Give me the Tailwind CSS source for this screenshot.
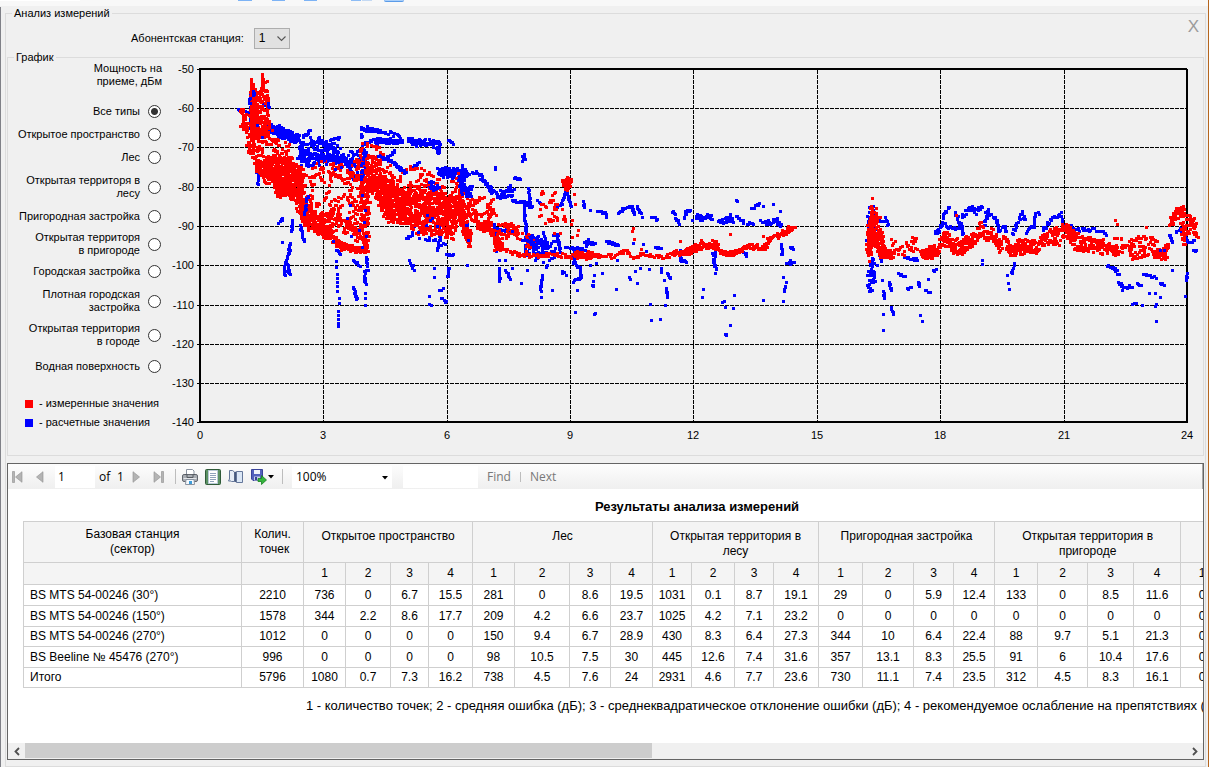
<!doctype html>
<html lang="ru">
  <head>
    <meta charset="UTF-8" />
    <meta name="viewport" content="width=device-width, initial-scale=1.0" />
    <title>Анализ измерений</title>
    <script src="https://cdn.jsdelivr.net/npm/@tailwindcss/browser@4"></script>
  </head>
  <body class="bg-[#f0f0f0] font-['Liberation_Sans',sans-serif] text-black">
    <div class="min-h-screen flex flex-col border-r border-[#b5651d]">
      <!-- bottom edge of the main toolbar -->
      <div class="h-[6px] flex items-start bg-[#f8f8f8] overflow-hidden">
        <div class="w-20 h-px bg-white"></div>
        <div class="ml-[158px] w-[14px] h-px bg-[#7db3f5]"></div>
        <div class="ml-5 w-[13px] h-px bg-[#7db3f5]"></div>
        <div class="ml-[19px] w-[13px] h-px bg-[#7db3f5]"></div>
        <div class="ml-[34px] w-[10px] h-px bg-[#8dbcf5]"></div>
        <div class="ml-px w-[10px] h-px bg-[#c4d9f3]"></div>
        <div class="ml-3 w-5 h-[2px] rounded-b-sm border-b border-[#5b9be8] bg-[#a9cffa]"></div>
      </div>

      <div class="grow flex flex-col border-l border-[#7f8087] mt-px pl-1 pr-[2px]">
        <fieldset class="grow min-w-0 flex flex-col border border-[#dcdcdc] px-px pb-[5px]">
          <legend class="ml-[5px] px-[2px] text-[11px] leading-[13px]">Анализ измерений</legend>

          <div class="flex items-start">
            <div class="flex items-center pt-2 pl-[124px] gap-[10px]">
              <label for="station" class="text-[11px] leading-[13px]">Абонентская станция:</label>
              <div class="relative">
                <select
                  id="station"
                  class="appearance-none block w-9 h-[21px] pl-1 border border-[#adadad] bg-[#e1e1e1] text-[12px] leading-[13px]"
                >
                  <option>1</option>
                </select>
                <svg class="absolute right-1 top-[7px] pointer-events-none" width="9" height="7" viewBox="0 0 9 7">
                  <path d="M.5 1.5 4.5 5.5 8.5 1.5" fill="none" stroke="#555" stroke-width="1.1" />
                </svg>
              </div>
            </div>
            <button type="button" aria-label="Закрыть" class="ml-auto mr-[5px] text-[17px] leading-[13px] text-[#9b9b9b]">X</button>
          </div>

          <fieldset class="min-w-0 border border-[#dcdcdc] mt-[2px]">
            <legend class="ml-[6px] px-[2px] text-[11px] leading-[13px]">График</legend>
            <div class="flex items-start">
              <div class="w-[162px] shrink-0 -mt-[2px] text-[11px] leading-[13px] text-right">
                <p class="pr-2 mb-[17px]">Мощность на<br />приеме, дБм</p>
                <div id="types" class="flex flex-col items-end pr-[9px]"></div>
                <p class="mt-6 ml-[17px] flex items-center gap-[6px]">
                  <span class="size-2 bg-[#f00]"></span>- измеренные значения
                </p>
                <p class="mt-[6px] ml-[17px] flex items-center gap-[6px]">
                  <span class="size-2 bg-[#00f]"></span>- расчетные значения
                </p>
              </div>
              <svg id="chart" class="grow min-w-0 text-[11px]" viewBox="170 64 1033 391" shape-rendering="crispEdges"></svg>
            </div>
          </fieldset>

          <section class="grow flex flex-col min-w-0 mt-[7px] border border-[#646464] bg-white">
            <div
              class="h-[25px] shrink-0 flex items-center bg-linear-to-b from-[#fdfdfd] to-[#efefef] border-r border-[#a8a8a8] font-['Open_Sans',sans-serif] text-[12px] leading-4"
            >
              <button type="button" aria-label="First page" class="ml-1">
                <svg width="11" height="12" viewBox="0 0 11 12" fill="#b4b4b4" stroke="#8f8f8f" stroke-width=".6">
                  <path d="M.5.5h2v11h-2zM10 .7v10.600L3.500 6z" />
                </svg>
              </button>
              <button type="button" aria-label="Previous page" class="ml-[13px]">
                <svg width="8" height="12" viewBox="0 0 8 12" fill="#b4b4b4" stroke="#8f8f8f" stroke-width=".6">
                  <path d="M7 .7v10.600L.5 6z" />
                </svg>
              </button>
              <input aria-label="Page" value="1" class="ml-[11px] w-10 h-[22px] pl-[3px] bg-white outline-none" />
              <span class="ml-1 w-[18px]">of</span>
              <span class="w-[7px]">1</span>
              <button type="button" aria-label="Next page" class="ml-2">
                <svg width="8" height="12" viewBox="0 0 8 12" fill="#b4b4b4" stroke="#8f8f8f" stroke-width=".6">
                  <path d="M1 .7v10.600L7.500 6z" />
                </svg>
              </button>
              <button type="button" aria-label="Last page" class="ml-[13px]">
                <svg width="11" height="12" viewBox="0 0 11 12" fill="#b4b4b4" stroke="#8f8f8f" stroke-width=".6">
                  <path d="M8.500.5h2v11h-2zM1 .7v10.600L7.500 6z" />
                </svg>
              </button>
              <span class="ml-[11px] w-px h-[15px] bg-[#bdbdbd]"></span>
              <button type="button" aria-label="Print" class="ml-[6px]">
                <svg width="16" height="16" viewBox="0 0 16 16">
                  <path d="M4.500.5h6l1.500 1.500V6h-7.500z" fill="#fff" stroke="#8a93a0" />
                  <rect x=".5" y="5.500" width="15" height="7" rx="1.500" fill="#a9adb3" stroke="#62666d" />
                  <path d="M3 5.500h2v3h6v-3h2" fill="none" stroke="#555a61" />
                  <path d="M1.500 9.500h13" stroke="#e4e6e9" />
                  <path d="M4 10.500h8l.5 5h-9z" fill="#f5f9fd" stroke="#8a93a0" />
                  <path d="M7 12h3v3H7z" fill="#3d9bd8" />
                </svg>
              </button>
              <button type="button" aria-label="Print layout" class="ml-[7px]">
                <svg width="16" height="16" viewBox="0 0 16 16">
                  <rect x=".5" y=".5" width="15" height="15" rx="1" fill="#7fae80" stroke="#2f5a38" />
                  <path d="M1 1h2v14H1zM13 1h2v14h-2z" fill="#5b9163" />
                  <path d="M3.500 1.500h9v13h-9z" fill="#fff" stroke="#b9c9d8" />
                  <path d="M5 4.500h6M5 6.500h6M5 8.500h6M5 10.500h6M5 12.500h4" stroke="#8fa2bb" />
                </svg>
              </button>
              <button type="button" aria-label="Page setup" class="ml-[7px]">
                <svg width="16" height="16" viewBox="0 0 16 16">
                  <path d="M1.500 1.500h3l2 1.500v9.500h-3l-.5-.5H.5l1-2z" fill="#e6edf6" stroke="#65779a" />
                  <path d="M6.500 3 8.500 2.500v11L6.500 12.500z" fill="#46587c" />
                  <path d="M8.500 2.500h6v11h-6z" fill="#dbe7f6" stroke="#65779a" />
                </svg>
              </button>
              <button type="button" aria-label="Export" class="ml-[6px] flex items-center">
                <svg width="17" height="17" viewBox="0 0 17 17">
                  <path d="M1.500 1.500h11v11H3l-1.500-1.500z" fill="#5361bd" stroke="#39439a" />
                  <path d="M4 2h6v4H4z" fill="#f0f3fb" />
                  <path d="M4 8.500h6v4H4z" fill="#c9d1e6" />
                  <path d="M5 9h2v3H5z" fill="#39439a" />
                  <path d="M8 10.500h3.500V7.500L16.500 12l-5 4.500v-3H8z" fill="#35b53c" stroke="#15801f" stroke-width=".8" />
                </svg>
                <svg class="ml-px" width="6" height="4" viewBox="0 0 6 4"><path d="M0 0h6L3 3.500z" /></svg>
              </button>
              <span class="ml-2 w-px h-[15px] bg-[#bdbdbd]"></span>
              <div class="relative ml-[9px]">
                <select aria-label="Zoom" class="appearance-none block w-[100px] h-[22px] pl-1 bg-white">
                  <option>100%</option>
                </select>
                <svg class="absolute right-1 top-[10px] pointer-events-none" width="6" height="4" viewBox="0 0 6 4">
                  <path d="M0 0h6L3 3.500z" />
                </svg>
              </div>
              <input aria-label="Find text" class="ml-[11px] w-[75px] h-[22px] bg-white outline-none" />
              <button type="button" class="ml-[9px] text-[#787878]">Find</button>
              <span class="ml-[9px] w-px h-[10px] bg-[#bdbdbd]"></span>
              <button type="button" class="ml-[9px] text-[#787878]">Next</button>
            </div>

            <div class="grow overflow-hidden text-[13px] leading-[15px]">
              <h1 class="ml-[15px] w-[1348px] pt-[10px] pb-[7px] text-center font-bold">Результаты анализа измерений</h1>
              <table class="ml-[15px] w-[1200px] table-fixed border-collapse text-center text-[12px] leading-[15px]">
                <colgroup id="cols"></colgroup>
                <thead id="head" class="bg-[#f4f4f4]"></thead>
                <tbody id="rows"></tbody>
              </table>
              <p class="ml-[298px] mt-[10px] mb-[30px] whitespace-nowrap">
                1 - количество точек; 2 - средняя ошибка (дБ); 3 - среднеквадратическое отклонение ошибки (дБ); 4 -
                рекомендуемое ослабление на препятствиях (дБ)
              </p>
            </div>

            <div class="h-[16px] shrink-0 flex items-center bg-[#f0f0f0]">
              <button type="button" aria-label="Scroll left" class="w-[17px] flex justify-center">
                <svg width="6" height="9" viewBox="0 0 6 9"><path d="M5 1 1.500 4.500 5 8" fill="none" stroke="#505050" stroke-width="1.800" /></svg>
              </button>
              <div class="grow h-[15px] self-start">
                <div class="h-full w-[54%] bg-[#cdcdcd]"></div>
              </div>
              <button type="button" aria-label="Scroll right" class="w-[17px] flex justify-center">
                <svg width="6" height="9" viewBox="0 0 6 9"><path d="M1 1 4.500 4.500 1 8" fill="none" stroke="#505050" stroke-width="1.800" /></svg>
              </button>
            </div>
          </section>
        </fieldset>
      </div>
    </div>

    <script>
      // terrain types
      const types = [
        ["Все типы", ""],
        ["Открытое пространство", "mt-[10px]"],
        ["Лес", "mt-[10px]"],
        ["Открытая территоря в<br>лесу", "mt-[10px]"],
        ["Пригородная застройка", "mt-[10px]"],
        ["Открытая территоря<br>в пригороде", "mt-[8px]"],
        ["Городская застройка", "mt-[8px]"],
        ["Плотная городская<br>застройка", "mt-[10px]"],
        ["Открытая территория<br>в городе", "mt-[8px]"],
        ["Водная поверхность", "mt-[12px]"],
      ];
      document.getElementById("types").innerHTML = types
        .map(
          ([name, gap], i) => `
        <div class="flex items-center gap-2 ${gap}">
          <label for="t${i}">${name}</label>
          <input type="radio" name="type" id="t${i}" ${i ? "" : "checked"}
            class="appearance-none size-[13px] shrink-0 rounded-full border border-[#333] bg-white checked:bg-[radial-gradient(circle,#333_3px,#fff_4px)]">
        </div>`,
        )
        .join("");

      // report table
      const widths = [
        218, 62, 42, 45, 38, 44, 42, 55, 41, 42, 39, 43, 39, 45, 44, 51, 40, 41, 43, 50, 46, 47, 43,
      ];
      const groups = [
        "Открытое пространство",
        "Лес",
        "Открытая территория в<br>лесу",
        "Пригородная застройка",
        "Открытая территория в<br>пригороде",
      ];
      const data = [
        "BS MTS 54-00246 (30°)|2210|736|0|6.7|15.5|281|0|8.6|19.5|1031|0.1|8.7|19.1|29|0|5.9|12.4|133|0|8.5|11.6|0",
        "BS MTS 54-00246 (150°)|1578|344|2.2|8.6|17.7|209|4.2|6.6|23.7|1025|4.2|7.1|23.2|0|0|0|0|0|0|0|0|0",
        "BS MTS 54-00246 (270°)|1012|0|0|0|0|150|9.4|6.7|28.9|430|8.3|6.4|27.3|344|10|6.4|22.4|88|9.7|5.1|21.3|0",
        "BS Beeline № 45476 (270°)|996|0|0|0|0|98|10.5|7.5|30|445|12.6|7.4|31.6|357|13.1|8.3|25.5|91|6|10.4|17.6|0",
        "Итого|5796|1080|0.7|7.3|16.2|738|4.5|7.6|24|2931|4.6|7.7|23.6|730|11.1|7.4|23.5|312|4.5|8.3|16.1|0",
      ];
      document.getElementById("cols").innerHTML = widths
        .map((w) => `<col style="width:${w}px">`)
        .join("");
      const th = (text, span, cls) =>
        `<th colspan="${span}" class="border border-[#cfcfcf] font-normal align-top ${cls}">${text}</th>`;
      document.getElementById("head").innerHTML =
        `<tr class="h-[41px]">${th("Базовая станция<br>(сектор)", 1, "pt-[5px]")}${th("Колич.<br>&nbsp;точек", 1, "pt-[5px]")}` +
        groups.map((g) => th(g, 4, "pt-[7px]")).join("") +
        th("", 1, "") +
        `</tr><tr class="h-[22px]">${th("", 1, "")}${th("", 1, "")}` +
        "12341234123412341234".split("").map((n) => th(n, 1, "pt-[3px]")).join("") +
        th("1", 1, "pt-[3px]") +
        "</tr>";
      document.getElementById("rows").innerHTML = data
        .map((line, r) => {
          const cells = line.split("|").map((v, i) =>
            `<td class="border border-[#cfcfcf] ${i ? "" : "text-left pl-[6px]"}">${v}</td>`,
          );
          return `<tr class="${r % 2 || r === 0 ? "h-[21px]" : "h-[20px]"}">${cells.join("")}</tr>`;
        })
        .join("");

      // chart
      let seed = 7;
      const rnd = () => {
        seed = (seed * 1664525 + 1013904223) % 4294967296;
        return seed / 4294967296;
      };
      const dot = (x, y) => `M${Math.round(x) - 1} ${Math.round(y) - 1}h3v3h-3z`;

      // n dots spread between an upper and a lower edge: [x, top, bottom], ...
      const holes = [
        [319, 190, 7, 10],
        [338, 188, 7, 9],
        [345, 208, 4, 9],
        [325, 208, 6, 5],
        [478, 187, 6, 8],
        [306, 180, 4, 5],
      ];
      const band = (n, ...edge) => {
        let d = "";
        const x0 = edge[0][0];
        const x1 = edge[edge.length - 1][0];
        for (let i = 0; i < n; i++) {
          const x = x0 + (x1 - x0) * rnd();
          const k = Math.max(1, edge.findIndex((e) => e[0] >= x));
          const [a, b] = [edge[k - 1], edge[k]];
          const t = (x - a[0]) / (b[0] - a[0]);
          const top = a[1] + (b[1] - a[1]) * t;
          const low = a[2] + (b[2] - a[2]) * t;
          // ragged edge on tall clouds
          const rag = Math.min(6, (low - top) / 8);
          const y = top + (low - top) * rnd() + (rnd() - 0.5) * rag * 2;
          if (holes.some(([cx, cy, rx, ry]) => ((x - cx) / rx) ** 2 + ((y - cy) / ry) ** 2 < 1)) continue;
          d += dot(x, y);
          if (rnd() < 0.25) d += dot(x + (rnd() < 0.5 ? 2 : -2), y + (rnd() - 0.5) * 3);
        }
        return d;
      };

      // polylines of dots: "x,y x,y;x,y"
      const trail = (text, jitter = 1) =>
        text
          .trim()
          .split(/\s*;\s*/)
          .map((part) => {
            const p = part.split(" ").map((s) => s.split(",").map(Number));
            let d = dot(...p[0]);
            for (let i = 1; i < p.length; i++) {
              const [ax, ay] = p[i - 1];
              const [bx, by] = p[i];
              const n = Math.ceil(Math.hypot(bx - ax, by - ay) / 1.5);
              for (let j = 1; j <= n; j++) {
                d += dot(
                  ax + ((bx - ax) * j) / n + (rnd() - 0.5) * jitter,
                  ay + ((by - ay) * j) / n + (rnd() - 0.5) * jitter * 2,
                );
              }
            }
            return d;
          })
          .join("");

      const layers = [
        ["#00f",
          band(230, [266, 124, 130], [280, 127, 136], [298, 135, 143]) +
          band(75, [298, 140, 164], [315, 138, 166], [335, 142, 164], [350, 145, 165], [362, 150, 178]) +
          band(70, [300, 152, 158], [325, 152, 160], [345, 156, 164], [354, 165, 182]) +
          band(100, [438, 167, 175], [450, 168, 178], [466, 170, 179]) +
          band(20, [403, 225, 240], [425, 225, 240], [447, 225, 248]) +
          band(70, [524, 228, 250], [535, 233, 260], [548, 244, 270], [556, 236, 254]) +
          band(30, [868, 208, 240], [876, 205, 240]) +
          band(36, [868, 255, 302], [872, 255, 282], [875, 256, 282]) +
          trail(`238,109 250,114;250,94 250,127;253,90 253,95;266,104 260,107;298,140 303,143 298,158;303,137 310,129;
            257,165 258,183;256,172 259,172;311,140 330,145 338,152;330,140 340,137;336,158 348,162 354,180;301,155 312,167;
            278,223 282,218;292,220 291,231;282,242;300,225 304,241;290,243 288,255;287,256 284,267 285,276;287,264 289,274;
            303,208 308,195;336,250 340,254;336,261;336,267;337,274;337,278;337,282;337,286;337,291;339,298;339,303;338,311;338,315;338,319;338,323;338,326;
            353,287 357,299;353,260 360,266;366,257 367,270;364,271 365,284;365,293;365,298;365,305;
            362,144 380,138 402,141;436,148 439,148;448,140 453,144;
            362,146 365,160;366,152 363,180;380,155 392,162 405,172;427,185 436,188;394,150 387,157;412,167 419,162;
            409,260 414,270;430,220;429,296;429,304 431,305;434,268;434,277;439,290 443,289;441,298 447,302;448,255;449,268 447,276;440,233 437,250;
            462,165 463,172;492,190 500,198;500,196 510,186;500,190 514,190;503,197 512,195;512,200 530,203;
            514,178 520,179;495,167 495,170;522,161 523,155;524,154 524,160;528,188 530,205;524,203 524,210 526,235;526,205 532,207;537,200 540,203;
            565,190 562,203 557,207;565,190 571,206;583,201 584,208;590,210;597,211 606,214;
            494,224 496,250;500,229 515,233;466,223 470,240;499,260;499,268 499,281;505,270 510,278;505,260;512,268;521,283;527,270;542,275 540,291;541,297;552,290;
            562,271 565,274;543,232 547,248;557,234 560,252;565,247 585,249;575,248 573,263;584,242 595,243;588,239 586,246;607,241 617,245;
            573,262 580,268 580,278 573,281;577,290;590,265;596,263;594,275;593,281 593,286;602,273;575,312;595,313;594,314;446,254 453,254;467,265;
            618,213 626,206 632,207 634,214;637,206 641,213;642,217;651,217 657,219;672,212 675,213;675,218 680,223;684,218 686,211 690,211;692,220;
            696,216 711,218;697,214 700,220;711,215;718,221 726,222 731,214;725,218 733,222;736,200;737,201;736,216 743,222;747,224 753,223;
            751,208 759,204;763,206;773,204;780,211;760,220 770,223 777,219 780,226;773,220 780,224;
            606,241 617,245;633,243;643,244;655,247 661,248;646,251;617,260;680,250 681,262;680,260 686,262;712,253 715,255;716,248 713,262 716,268;715,273;743,252 747,255;
            781,244 782,254;790,247 793,249;786,263 794,262;790,260;783,277;786,282;785,286 784,290;783,301;763,300;703,289;702,297;722,302;724,301;725,307;733,308;734,295;730,325;725,334 727,335;
            661,268 661,271;667,273 671,278;664,280;666,288 667,296;665,305;650,304;651,320;660,319;629,277;630,279;637,283;635,271;640,268;649,269;616,289;
            878,218 882,222;885,217 888,225;879,252 881,262;877,265;882,280;883,291 884,298;889,282 891,290;898,273 905,277;907,288 911,288;918,282 919,285;925,290 929,292;928,279;933,270 935,269;
            891,307 893,314;883,314;883,330;920,315;922,321;904,257 918,260;
            982,260;982,264;1014,263 1011,273;1007,275;1008,283;1009,289;
            1107,266 1114,268 1118,274;1118,282 1124,288 1132,286;1122,290;1137,283 1141,286;1143,274 1155,277;1160,283 1163,284;1149,293;1155,293;1160,297;1132,304 1136,302;1142,305;1155,306;1156,304;1156,321;
            1172,270;1187,273 1186,281;1185,296;1169,235 1172,242;1176,232 1180,228 1188,242 1194,240;1193,250 1196,251`, 1.3) +
          // denser curves
          trail(`361,137 361,127 382,131 400,136;364,130 375,131;408,138 440,143;412,144 440,145 437,152;408,141 425,142;375,142 402,141;436,141 438,151;
            464,172 478,173 484,182 492,190;487,184 493,194;480,174 487,186;
            935,233 943,224 955,229 962,224;943,218 948,206;955,212 963,234;
            962,217 968,208 974,208 982,208;970,209 975,212;988,209 984,225;985,212 996,217 998,230 1004,226 1006,233;1012,233 1017,222 1022,213 1025,220;
            1026,233 1033,225 1035,215 1039,213;1043,230 1050,220 1060,213 1063,223;1065,225 1080,229 1100,230 1107,234`, 1.9) +
          trail(`303,150 318,157 335,161 350,164;318,138 328,147 337,150;602,212 605,214;696,218 711,216;720,222 732,217;765,222 779,221`, 3)],
        ["#f00",
          band(200, [250, 84, 130], [253, 86, 140], [257, 96, 140], [261, 80, 140], [265, 84, 138], [268, 95, 138]) +
          trail("251,79 251,140;253,84 253,150;262,74 263,90;267,95 268,108", 1) +
          band(70, [240, 106, 114], [244, 112, 135], [248, 125, 152], [252, 130, 162], [258, 130, 170]) +
          band(75, [256, 158, 170], [262, 162, 180], [270, 160, 186]) +
          band(500, [264, 164, 176], [270, 154, 176], [278, 157, 194], [290, 159, 196], [298, 167, 198], [303, 177, 213]) +
          band(26, [272, 175, 192], [282, 180, 200], [292, 190, 199]) +
          band(60, [258, 120, 160], [272, 122, 155], [285, 140, 160], [290, 145, 160]) +
          band(150, [296, 195, 210], [304, 203, 225], [312, 214, 231], [325, 224, 238], [333, 232, 238]) +
          band(100, [333, 235, 244], [342, 242, 249], [355, 246, 252], [366, 248, 252]) +
          band(350, [300, 172, 218], [318, 165, 230], [335, 163, 233], [350, 163, 235], [362, 158, 246]) +
          band(60, [310, 205, 222], [330, 212, 222], [355, 222, 232]) +
          band(45, [357, 145, 170], [375, 141, 165], [382, 152, 170]) +
          band(115, [360, 168, 246], [368, 168, 248]) +
          band(950, [367, 165, 187], [375, 170, 198], [385, 176, 217], [395, 181, 220], [405, 190, 223], [420, 187, 231], [440, 190, 233], [449, 198, 238], [453, 186, 234], [458, 174, 220], [463, 192, 222]) +
          band(75, [372, 150, 168], [385, 154, 174], [400, 168, 187], [420, 165, 190], [435, 175, 194], [445, 185, 197]) +
          band(115, [459, 202, 218], [464, 216, 238], [470, 232, 248]) +
          band(85, [463, 198, 220], [480, 196, 223], [490, 200, 226], [496, 208, 216]) +
          band(65, [476, 220, 228], [490, 225, 234], [496, 235, 250], [502, 242, 250]) +
          band(65, [497, 220, 238], [515, 225, 236], [525, 225, 248], [536, 236, 252]) +
          trail("495,246 505,250 520,255 535,256 550,254 570,256 580,253 590,253 600,256 615,256 625,251 632,256 645,254 665,257 675,253 690,252 700,247 705,244 715,246 722,253 735,253 745,247 755,245 765,248 770,238 780,235 790,229 794,228", 2) +
          band(60, [575, 251, 258], [600, 254, 258]) +
          band(80, [673, 250, 256], [690, 247, 254], [702, 239, 250], [710, 243, 249], [719, 239, 246]) +
          band(80, [720, 250, 256], [735, 250, 256], [745, 245, 250], [765, 244, 249], [770, 236, 240], [780, 232, 238], [788, 226, 232], [794, 225, 231]) +
          band(38, [562, 178, 188], [571, 178, 190]) +
          band(32, [540, 190, 212], [548, 196, 226], [560, 190, 238], [565, 205, 230]) +
          trail("574,194;575,204;572,220;571,224;578,230;577,235;572,237;633,228;632,231;634,239;641,249;680,241;730,234;763,236;872,198;1115,220;1117,224;1146,227;956,215", 1) +
          band(150, [868, 230, 257], [871, 208, 240], [875, 206, 248], [880, 227, 256], [883, 241, 257]) +
          band(45, [868, 228, 257], [871, 228, 257]) +
          band(50, [882, 246, 256], [892, 250, 258]) +
          band(45, [890, 230, 258], [900, 246, 258], [908, 240, 256], [915, 235, 252], [920, 250, 258], [930, 246, 258]) +
          band(55, [922, 252, 258], [932, 246, 258], [939, 246, 254]) +
          band(370, [939, 235, 247], [945, 229, 245], [953, 239, 253], [962, 239, 253], [973, 234, 246], [979, 222, 236], [985, 227, 239], [992, 229, 241], [1000, 241, 254], [1004, 232, 248], [1010, 245, 255], [1020, 239, 253], [1035, 240, 253], [1045, 231, 245], [1060, 227, 241], [1065, 223, 239]) +
          band(150, [1065, 224, 236], [1072, 230, 247], [1080, 235, 251], [1095, 238, 252], [1110, 244, 254], [1117, 244, 256]) +
          band(80, [1114, 232, 255], [1125, 242, 257], [1140, 234, 257], [1148, 232, 256], [1160, 245, 257]) +
          band(50, [1153, 250, 258], [1164, 249, 258], [1169, 240, 252]) +
          band(50, [1169, 222, 230], [1174, 209, 224], [1180, 206, 215], [1183, 210, 217]) +
          band(48, [1182, 220, 246], [1187, 215, 232], [1196, 216, 236])],
        ["#00f",
          trail("253,91 253,96;250,98 250,101;268,103 268,107;257,125;262,137;304,214 308,195;306,200;364,150 361,172 362,178;362,195;365,210;364,222;366,236;362,247;359,230;333,241;350,205;347,218;351,236;378,156 392,162 405,173;430,220;427,215;432,218;437,226;418,232;466,225;468,240;497,228;512,231;522,240;531,236;531,241;935,233 939,230;1160,250;1164,250", 2) +
          band(45, [459, 180, 190], [464, 180, 197], [471, 188, 197]) +
          band(22, [300, 142, 166], [330, 145, 166], [356, 150, 175]) +
          band(14, [428, 178, 190], [437, 183, 190]) +
          band(20, [526, 232, 250], [540, 240, 250])],
      ];

      const xTicks = [200, 323, 447, 570, 693, 817, 940, 1064, 1187];
      const yTicks = [69, 108, 147, 187, 226, 265, 305, 344, 383, 422];
      const grid =
        xTicks.slice(1, -1).map((x) => `M${x}.5 70V422`).join("") +
        yTicks.slice(1, -1).map((y) => `M200 ${y}.5H1187`).join("");
      document.getElementById("chart").innerHTML =
        `<path d="${grid}" fill="none" stroke="#000" stroke-dasharray="4 1"/>` +
        `<path d="${yTicks.map((y) => `M197 ${y}.5h4`).join("")}" stroke="#000"/>` +
        `<path d="M200 69H1187M200 422H1188M1187 69V423M200 68V423" fill="none" stroke="#000" stroke-width="2"/>` +
        yTicks.map((y, i) => `<text x="194" y="${y + 4}" text-anchor="end">${-50 - i * 10}</text>`).join("") +
        xTicks.map((x, i) => `<text x="${x}" y="439" text-anchor="middle">${i * 3}</text>`).join("") +
        layers.map(([color, d]) => `<path d="${d}" fill="${color}"/>`).join("");
    </script>
  </body>
</html>
